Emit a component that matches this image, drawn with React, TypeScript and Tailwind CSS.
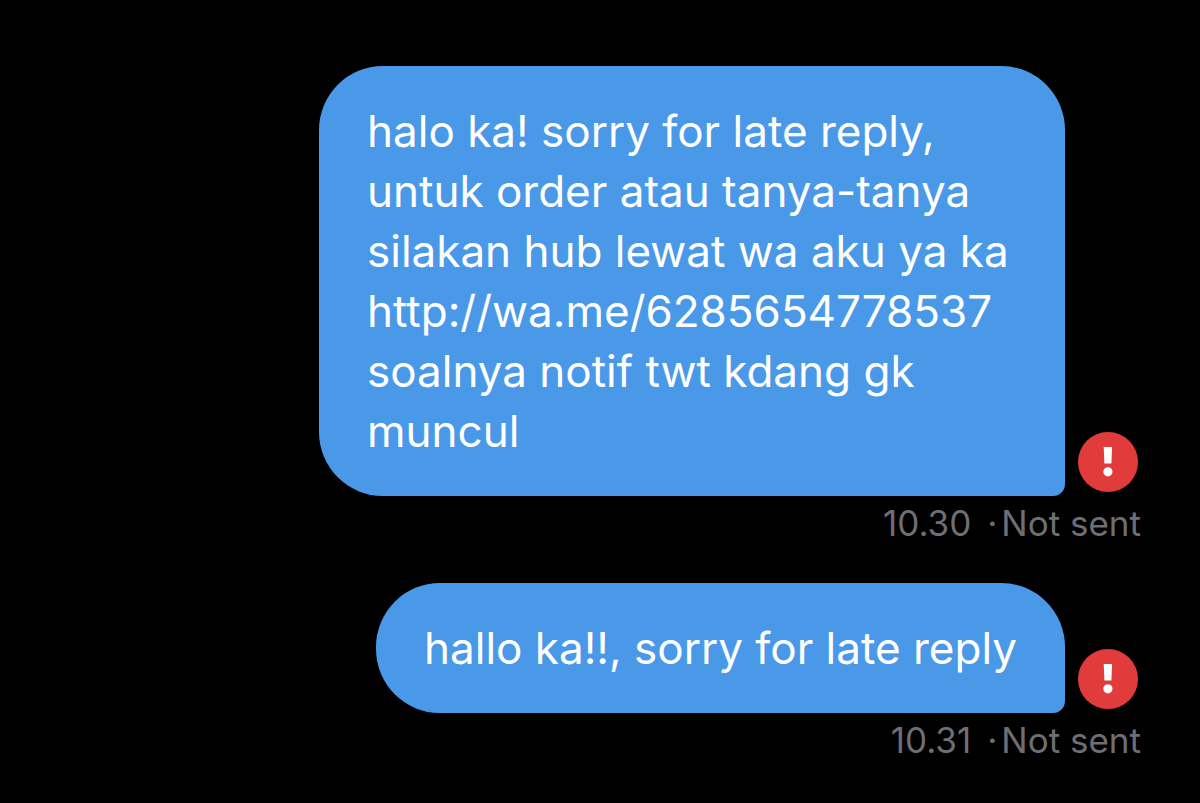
import React from "react";

type Message = { id: string; text: string; time: string; link?: string; after?: string };

const messages: Message[] = [
  {
    id: "first",
    text: "halo ka! sorry for late reply, untuk order atau tanya-tanya silakan hub lewat wa aku ya ka",
    link: "http://wa.me/6285654778537",
    after: "soalnya notif twt kdang gk muncul",
    time: "10.30",
  },
  { id: "second", text: "hallo ka!!, sorry for late reply", time: "10.31" },
];

function RetryButton() {
  return (
    <button type="button" aria-label="Not sent, retry" className="mb-1 size-[60px] shrink-0 rounded-full bg-[#e23b3b]">
      <svg viewBox="0 0 60 60" className="size-full" fill="#fff" aria-hidden="true">
        <path d="M25.7 15h8.4l-.7 16.5h-7z" />
        <circle cx="29.9" cy="39.8" r="4.6" />
      </svg>
    </button>
  );
}

function Bubble({ message }: { message: Message }) {
  return (
    <article className="flex flex-col items-end">
      <div className="flex items-end gap-[13px] pr-[3px]">
        <p className="max-w-[746px] rounded-[64px] rounded-br-[12px] bg-[#4a99e9] px-12 py-[35px] text-[44px] leading-[60px] text-white">
          {message.text}
          {message.link && (
            <>
              {" "}
              <a href={message.link}>{message.link}</a> {message.after}
            </>
          )}
        </p>
        <RetryButton />
      </div>
      <p className="flex gap-4 pt-[7px] text-[35px] leading-10 text-[#6e6f73]">
        <time>{message.time}</time>
        <span className="flex gap-1">
          <span>·</span>
          <span>Not sent</span>
        </span>
      </p>
    </article>
  );
}

export default function App() {
  return (
    <main className="flex min-h-screen flex-col gap-10 bg-black pt-[66px] pr-[59px] font-['Inter',sans-serif]">
      {messages.map((message) => (
        <Bubble key={message.id} message={message} />
      ))}
    </main>
  );
}
